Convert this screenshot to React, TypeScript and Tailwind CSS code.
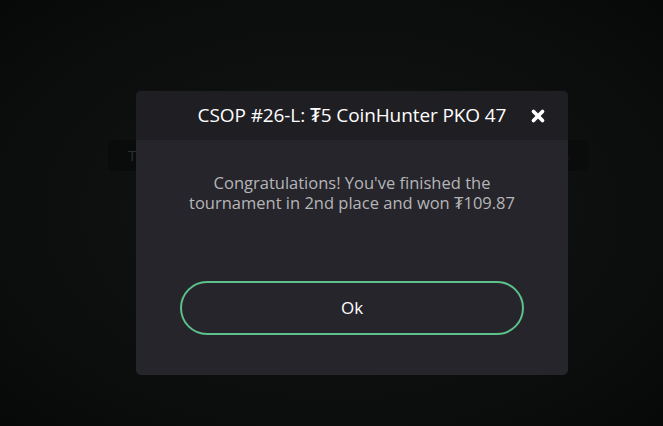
import { X } from "lucide-react";

const App = () => {
  return (
    <div className="relative w-[663px] h-[426px] overflow-hidden bg-[#0e1110] font-['Open_Sans','Noto_Sans',sans-serif]">
      <div className="absolute inset-0 bg-[radial-gradient(ellipse_at_center,#111513_0%,#0c0f0e_60%,#070908_100%)]" />
      {/* page behind the overlay */}
      <div className="absolute left-[108px] top-[140px] w-[481px] h-[31px] rounded-md bg-[#0a0c0b] flex items-center justify-between px-5 text-[15px] text-[#2c302e]">
        <span>T</span>
        <span>s</span>
      </div>
      <div className="absolute inset-0 flex items-start pl-[136px] pt-[91px]">
        <div className="w-[432px] h-[284px] rounded-[5px] overflow-hidden bg-[#26252b] flex flex-col">
          <div className="relative h-[49px] bg-[#1f1e23] flex items-center justify-center">
            <span className="text-white text-[19px] font-medium tracking-[-0.1px]">
              CSOP #26-L: ₮5 CoinHunter PKO 47
            </span>
            <X className="absolute right-[21px] top-[16px] w-[18px] h-[18px] text-white" strokeWidth={5} />
          </div>
          <div className="flex flex-col items-center pt-[33px]">
            <p className="text-[#b5b5b8] text-[16.5px] leading-[20px] text-center w-[330px]">
              Congratulations! You've finished the tournament in 2nd place and won ₮109.87
            </p>
            <button className="mt-[68px] w-[344px] h-[54px] rounded-full border-2 border-[#5ec08b] text-white text-[17px] font-medium">
              Ok
            </button>
          </div>
        </div>
      </div>
    </div>
  );
};

export default App;
